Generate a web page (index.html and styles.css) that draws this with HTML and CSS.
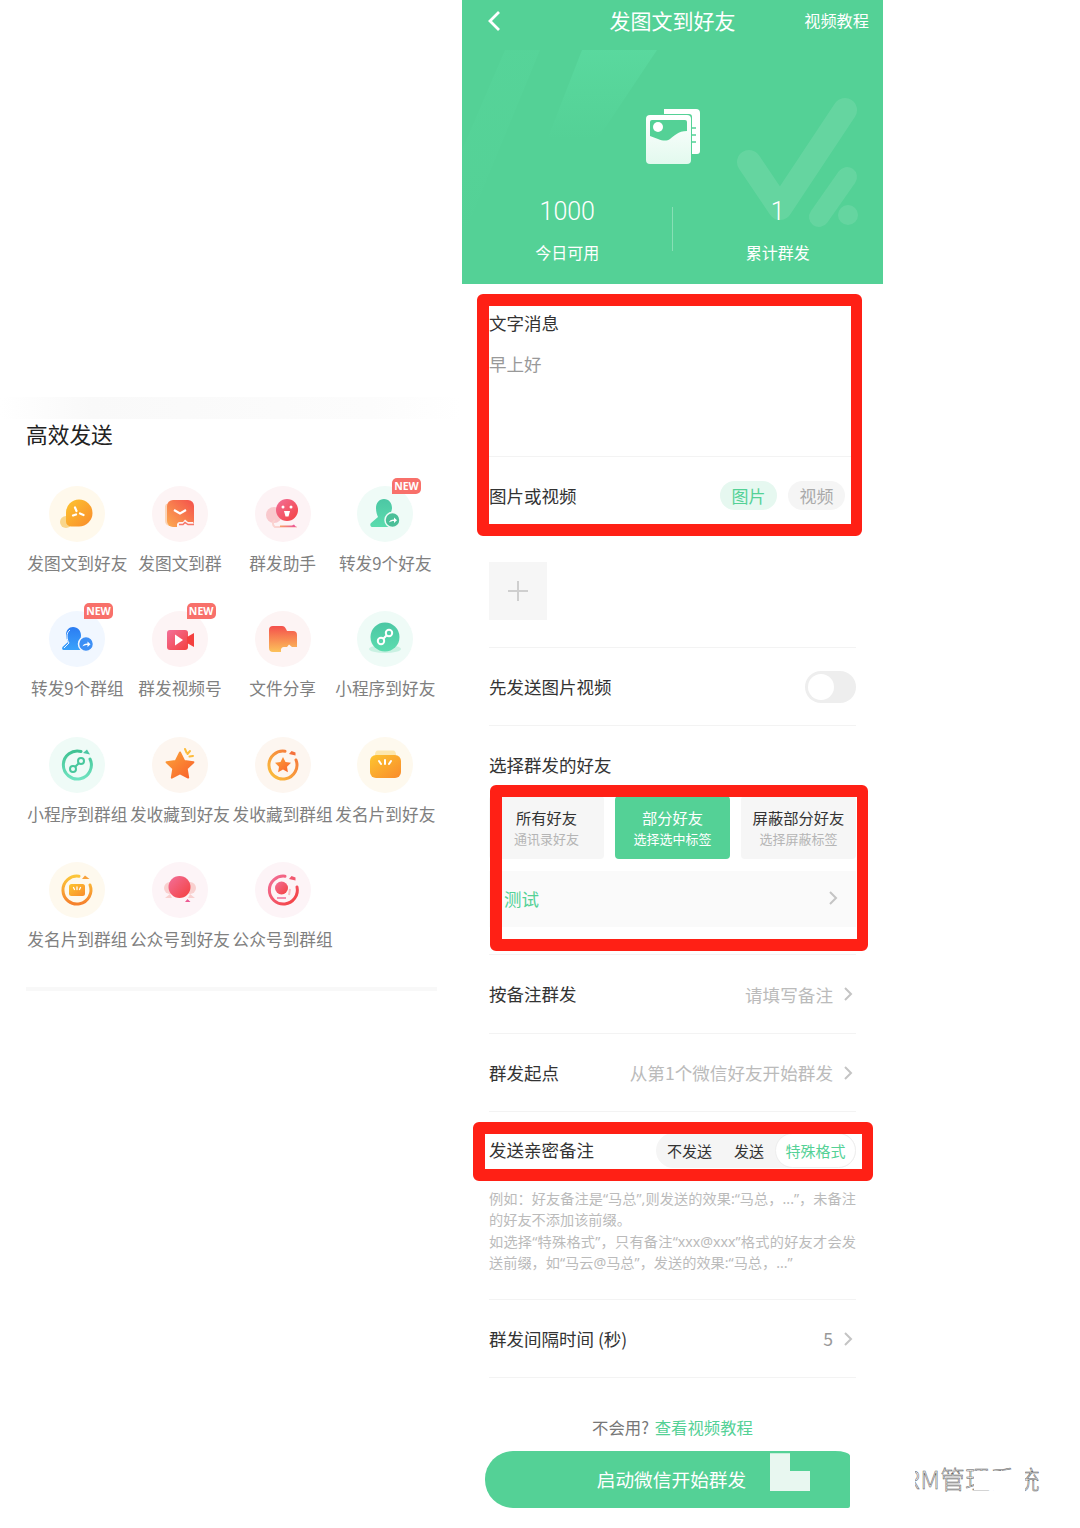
FILE: index.html
```html
<!DOCTYPE html>
<html lang="zh-CN">
<head>
    <meta charset="UTF-8">
    <meta name="viewport" content="width=device-width, initial-scale=1.0">
    <title>发图文到好友</title>
    <link rel="stylesheet" href="styles.css">
</head>
<body>
    <svg class="defs" aria-hidden="true">
        <defs>
            <linearGradient id="gOrange" x1="0" y1="0" x2="1" y2="1"><stop offset="0" stop-color="#fdc52f"/><stop offset="1" stop-color="#f98b2c"/></linearGradient>
            <linearGradient id="gRed" x1="1" y1="0" x2="0" y2="1"><stop offset="0" stop-color="#f4504c"/><stop offset="1" stop-color="#fcab50"/></linearGradient>
            <linearGradient id="gPink" x1="0" y1="0" x2="1" y2="1"><stop offset="0" stop-color="#f2709a"/><stop offset="1" stop-color="#f4403f"/></linearGradient>
            <linearGradient id="gBlue" x1="0" y1="0" x2="0" y2="1"><stop offset="0" stop-color="#2b7cf2"/><stop offset="1" stop-color="#3aa2fb"/></linearGradient>
            <linearGradient id="gMint" x1="0" y1="0" x2="0" y2="1"><stop offset="0" stop-color="#4cc7a4"/><stop offset="1" stop-color="#5bdcae"/></linearGradient>
            <linearGradient id="gFolder" x1="0" y1="0" x2="0" y2="1"><stop offset="0" stop-color="#f4504c"/><stop offset="1" stop-color="#fcc25a"/></linearGradient>
            <linearGradient id="gStar" x1="0" y1="0" x2="1" y2="1"><stop offset="0" stop-color="#fba23a"/><stop offset="1" stop-color="#f9602a"/></linearGradient>
            <linearGradient id="gRingMint" x1="0" y1="0" x2="0" y2="1"><stop offset="0" stop-color="#3fc292"/><stop offset="1" stop-color="#6fe3c0"/></linearGradient>
            <linearGradient id="gRingOrange" x1="1" y1="0" x2="0" y2="1"><stop offset="0" stop-color="#f4713c"/><stop offset="1" stop-color="#fbc23c"/></linearGradient>
            <linearGradient id="gRingGold" x1="0" y1="0" x2="0" y2="1"><stop offset="0" stop-color="#fcc63a"/><stop offset="1" stop-color="#f5812d"/></linearGradient>
            <linearGradient id="gBar" x1="0" y1="0" x2="1" y2="0"><stop offset="0" stop-color="#f9a063"/><stop offset="1" stop-color="#ea4f9a"/></linearGradient>
            <linearGradient id="gCard" x1="0" y1="0" x2="0" y2="1"><stop offset="0" stop-color="#ffffff"/><stop offset="1" stop-color="#e2f9ee"/></linearGradient>
            <linearGradient id="gFade" x1="0" y1="0" x2="0" y2="1"><stop offset="0" stop-color="#5fe0a6" stop-opacity=".5"/><stop offset="1" stop-color="#5fe0a6" stop-opacity="0"/></linearGradient>
        </defs>
    </svg>

    <section class="tools">
        <div class="tools-band"></div>
        <h2 class="tools-title">高效发送</h2>
        <div class="tool-grid">
            <div class="tool">
                <svg class="tool-icon" viewBox="0 0 56 56"><circle cx="28" cy="28" r="28" fill="#fff9ec"/><circle cx="17" cy="36" r="6" fill="#f9d68c"/><path d="M30 13.500a13.500 13.500 0 0 1 0 27h-8a5 5 0 0 1-5-5v-9a13 13 0 0 1 13-13z" fill="url(#gOrange)"/><path d="M26 21.500l1.500 3.500M31 27.500l3.500 1.500M24 29.500l3-1" stroke="#fff" stroke-width="2.200" stroke-linecap="round"/></svg>
                <span class="tool-name">发图文到好友</span>
            </div>
            <div class="tool">
                <svg class="tool-icon" viewBox="0 0 56 56"><circle cx="28" cy="28" r="28" fill="#fdf4f5"/><path d="M14 18h6v22h-2a5 5 0 0 1-5-5V20z" fill="#fbd5b8"/><rect x="15" y="14" width="27" height="27" rx="6" fill="url(#gRed)"/><path d="M22 24l6 3.500 6-3.500" fill="none" stroke="#fff" stroke-width="2.200"/><path d="M25 41v-3a3 3 0 0 1 3-2h3l2-2.500 3 2.500h5v5z" fill="#fdf4f5"/><path d="M27 38.500h4l2-2 3 2h6" fill="none" stroke="#f8766a" stroke-width="1.500"/></svg>
                <span class="tool-name">发图文到群</span>
            </div>
            <div class="tool">
                <svg class="tool-icon" viewBox="0 0 56 56"><circle cx="28" cy="28" r="28" fill="#fdf3f5"/><circle cx="19" cy="29" r="8" fill="#f9c9cd"/><path d="M20 34a4 4 0 0 0 0 7h22" fill="none" stroke="#fbd3d0" stroke-width="2"/><path d="M25 41h16l-2-2.500-2 1H25z" fill="url(#gBar)"/><circle cx="32" cy="24" r="11" fill="url(#gPink)"/><circle cx="28" cy="21" r="1.500" fill="#fff"/><circle cx="36" cy="21" r="1.500" fill="#fff"/><path d="M29 25h6l-1.500 5.500h-3z" fill="#fff"/></svg>
                <span class="tool-name">群发助手</span>
            </div>
            <div class="tool">
                <svg class="tool-icon" viewBox="0 0 56 56"><circle cx="28" cy="28" r="28" fill="#effbf7"/><path d="M27 13c5 0 8 4 8 9 0 3-2 6-3 8l3 4-1 7H16c-2.500 0-3.500-2.500-2-4l7-6c-1-2-2-5-2-9 0-5 3-9 8-9z" fill="url(#gMint)"/><circle cx="35.500" cy="34" r="7.500" fill="#4bbf98" stroke="#effbf7" stroke-width="1.500"/><path d="M32 36.500c.5-2 2-3 5-3v-2l3 2.800-3 2.700v-2c-2 0-3.500.5-5 1.500z" fill="#fff"/></svg>
                <span class="tool-name">转发9个好友</span>
                <span class="badge">NEW</span>
            </div>

            <div class="tool">
                <svg class="tool-icon" viewBox="0 0 56 56"><circle cx="28" cy="28" r="28" fill="#f1f7ff"/><path d="M24 16c5 0 8 4 8 8.500 0 3-1 5-2.500 6.500l3 3v5H15c-2 0-2.500-2-1-3.500l5-4.500c-1-2-2-4-2-7.500 0-4 3-7.500 7-7.500z" fill="url(#gBlue)"/><path d="M21 19c-2 1.500-3 3.500-3 6 0 3 1 5.500 2 7l-5 5" fill="none" stroke="#f1f7ff" stroke-width="1"/><circle cx="37" cy="33" r="7.500" fill="#3d8ff5" stroke="#f1f7ff" stroke-width="1.500"/><path d="M33.500 35.500c.5-2 2-3 5-3v-2l3 2.800-3 2.700v-2c-2 0-3.500.5-5 1.500z" fill="#fff"/></svg>
                <span class="tool-name">转发9个群组</span>
                <span class="badge">NEW</span>
            </div>
            <div class="tool">
                <svg class="tool-icon" viewBox="0 0 56 56"><circle cx="28" cy="28" r="28" fill="#fdf4f5"/><rect x="15" y="19" width="21" height="20" rx="3" fill="url(#gPink)"/><path d="M35 26l7-4v14l-7-4z" fill="#f4403f"/><path d="M23 23.500l8 5.500-8 5.500z" fill="#fff"/></svg>
                <span class="tool-name">群发视频号</span>
                <span class="badge">NEW</span>
            </div>
            <div class="tool">
                <svg class="tool-icon" viewBox="0 0 56 56"><circle cx="28" cy="28" r="28" fill="#fdf4f4"/><path d="M14 19a4 4 0 0 1 4-4h9c2 0 3 1 4 3l1 2h6a4 4 0 0 1 4 4v13a4 4 0 0 1-4 4H18a4 4 0 0 1-4-4z" fill="url(#gFolder)"/><path d="M26 41v-3a3 3 0 0 1 3-2h3l2-2.500 3 2.500h5v5z" fill="#fdf4f4"/></svg>
                <span class="tool-name">文件分享</span>
            </div>
            <div class="tool">
                <svg class="tool-icon" viewBox="0 0 56 56"><circle cx="28" cy="28" r="28" fill="#effbf7"/><ellipse cx="28" cy="38" rx="16" ry="4" fill="#c9f1e2"/><circle cx="28" cy="26" r="14.500" fill="url(#gMint)"/><g fill="none" stroke="#fff" stroke-width="2"><circle cx="24" cy="30" r="3.200"/><circle cx="32" cy="22" r="3.200"/><path d="M26.300 27.700l3.400-3.400"/></g></svg>
                <span class="tool-name">小程序到好友</span>
            </div>

            <div class="tool">
                <svg class="tool-icon" viewBox="0 0 56 56"><circle cx="28" cy="28" r="28" fill="#effbf7"/><path d="M32 14.500A14 14 0 1 0 41 22" fill="none" stroke="url(#gRingMint)" stroke-width="3" stroke-linecap="round"/><path d="M34 16l4-3.500 3 5z" fill="#4cc7a4"/><g fill="none" stroke="#48c79c" stroke-width="2"><circle cx="24" cy="32" r="3"/><circle cx="32" cy="24" r="3"/><path d="M26.200 29.800l3.600-3.600"/></g></svg>
                <span class="tool-name">小程序到群组</span>
            </div>
            <div class="tool">
                <svg class="tool-icon" viewBox="0 0 56 56"><circle cx="28" cy="28" r="28" fill="#fdf6f0"/><path d="M28 15.500l4.200 8.400 9.200 1.300-6.700 6.400 1.500 9-8.200-4.300-8.200 4.300 1.500-9-6.700-6.400 9.200-1.300z" fill="url(#gStar)" stroke="url(#gStar)" stroke-width="2" stroke-linejoin="round"/><path d="M33 12l1.500 3.500M38 14l-2.500 3M41 19l-3.500 .5" stroke="#fdbb3a" stroke-width="2" stroke-linecap="round"/></svg>
                <span class="tool-name">发收藏到好友</span>
            </div>
            <div class="tool">
                <svg class="tool-icon" viewBox="0 0 56 56"><circle cx="28" cy="28" r="28" fill="#fdf6f0"/><path d="M30 14.200A14 14 0 1 0 41 23" fill="none" stroke="url(#gRingOrange)" stroke-width="3" stroke-linecap="round"/><path d="M34 17l2.500-3 4 1.500v3z" fill="#f4713c"/><path d="M28 20l2.500 5 5.500.8-4 3.900.9 5.500-4.900-2.600-4.900 2.600.9-5.500-4-3.900 5.500-.8z" fill="url(#gStar)"/></svg>
                <span class="tool-name">发收藏到群组</span>
            </div>
            <div class="tool">
                <svg class="tool-icon" viewBox="0 0 56 56"><circle cx="28" cy="28" r="28" fill="#fef9ee"/><path d="M18 18c0-3 1-4.500 3-4.500h15c2 0 3 1.500 3 4.500z" fill="#fde7ad"/><rect x="13" y="18" width="31" height="23" rx="6" fill="url(#gOrange)"/><path d="M28 23v4M22 24l2 3M34 24l-2 3" stroke="#fff" stroke-width="2" stroke-linecap="round"/></svg>
                <span class="tool-name">发名片到好友</span>
            </div>

            <div class="tool">
                <svg class="tool-icon" viewBox="0 0 56 56"><circle cx="28" cy="28" r="28" fill="#fef9ee"/><path d="M30 14.200A14 14 0 1 0 41 23" fill="none" stroke="url(#gRingGold)" stroke-width="3" stroke-linecap="round"/><path d="M33 17l3-3.500 4.500 3.500z" fill="#f8a13a"/><rect x="20" y="22" width="16" height="12" rx="2.500" fill="url(#gOrange)"/><path d="M28 25v2.500M24.500 25.500l1 2M31.500 25.500l-1 2" stroke="#fff" stroke-width="1.300" stroke-linecap="round"/></svg>
                <span class="tool-name">发名片到群组</span>
            </div>
            <div class="tool">
                <svg class="tool-icon" viewBox="0 0 56 56"><circle cx="28" cy="28" r="28" fill="#fdf4f7"/><circle cx="18" cy="26" r="6" fill="#f9d0cf"/><circle cx="38" cy="26" r="6" fill="#f9d0cf"/><path d="M13 36h7l-2-4zM43 36h-7l2-4z" fill="#f9d0cf"/><circle cx="27.500" cy="25" r="11" fill="url(#gPink)"/><path d="M16 40h17l2.500-3 3 3z" fill="url(#gBar)"/></svg>
                <span class="tool-name">公众号到好友</span>
            </div>
            <div class="tool">
                <svg class="tool-icon" viewBox="0 0 56 56"><circle cx="28" cy="28" r="28" fill="#fdf4f7"/><path d="M30 14.200A14 14 0 1 0 42 25" fill="none" stroke="url(#gPink)" stroke-width="3" stroke-linecap="round"/><path d="M34 17l2.500-3 4 1.500v3z" fill="#f2576e"/><circle cx="26.500" cy="26" r="6.500" fill="url(#gPink)"/><path d="M22 36h9" stroke="#f2709a" stroke-width="1.500"/><path d="M35 27l-1 6" stroke="#f9c0c5" stroke-width="2"/></svg>
                <span class="tool-name">公众号到群组</span>
            </div>
        </div>
        <div class="tools-rule"></div>
    </section>

    <main class="phone">
        <header class="hero">
            <svg class="hero-bg" viewBox="0 0 421 284">
                <path d="M43 50h35L0 240v-90z" fill="url(#gFade)" opacity=".35"/>
                <path d="M120 50h75l-60 90H85z" fill="url(#gFade)"/>
                <path d="M287 162l31 46 65-98" fill="none" stroke="#fff" stroke-opacity=".1" stroke-width="24" stroke-linecap="round" stroke-linejoin="round"/>
                <path d="M385 177l-28 40" fill="none" stroke="#fff" stroke-opacity=".1" stroke-width="20" stroke-linecap="round"/>
                <circle cx="386" cy="215" r="10" fill="#fff" fill-opacity=".1"/>
            </svg>
            <div class="nav">
                <svg class="nav-back" viewBox="0 0 14 22"><path d="M12 2L3 11l9 9" fill="none" stroke="#fff" stroke-width="2.800"/></svg>
                <span class="nav-title">发图文到好友</span>
                <span class="nav-link">视频教程</span>
            </div>
            <svg class="hero-icon" viewBox="0 0 56 56">
                <path d="M19 1h32a4 4 0 0 1 4 4v38a3 3 0 0 1-3 3h-5V9a3 3 0 0 0-3-3H19z" fill="#fff"/>
                <path d="M47 20h4M47 27h4M47 34h4" stroke="#54d196" stroke-width="1.500"/>
                <rect x="1" y="7" width="45" height="49" rx="4" fill="url(#gCard)"/>
                <path d="M5 14a2 2 0 0 1 2-2h33a2 2 0 0 1 2 2v9c-9 0-13 5-17 8-3 2-7 2-12 0l-8-3z" fill="#54d196"/>
                <circle cx="13" cy="19" r="5" fill="#fff"/>
            </svg>
            <div class="stats">
                <div class="stat"><span class="stat-num">1000</span><span class="stat-label">今日可用</span></div>
                <div class="stat"><span class="stat-num">1</span><span class="stat-label">累计群发</span></div>
            </div>
        </header>

        <div class="form">
            <div class="msg">
                <div class="label">文字消息</div>
                <div class="msg-text">早上好</div>
            </div>
            <div class="row row-plain row-media">
                <span class="label">图片或视频</span>
                <div class="pills"><span class="pill pill-on">图片</span><span class="pill">视频</span></div>
            </div>
            <div class="upload"><svg class="upload-plus" viewBox="0 0 20 20"><path d="M10 0v20M0 10h20" stroke="#cfcfcf" stroke-width="2"/></svg></div>
            <div class="rule"></div>
            <div class="row">
                <span class="label">先发送图片视频</span>
                <span class="toggle"><span class="toggle-knob"></span></span>
            </div>
            <div class="targets">
                <div class="label">选择群发的好友</div>
                <div class="tabs">
                    <div class="tab"><b>所有好友</b><small>通讯录好友</small></div>
                    <div class="tab tab-on"><b>部分好友</b><small>选择选中标签</small></div>
                    <div class="tab"><b>屏蔽部分好友</b><small>选择屏蔽标签</small></div>
                </div>
                <div class="picked">
                    <span>测试</span>
                    <svg class="chev" viewBox="0 0 10 16"><path d="M2 2l6 6-6 6" fill="none" stroke="#c4c4c4" stroke-width="2"/></svg>
                </div>
            </div>
            <div class="row row-tall">
                <span class="label">按备注群发</span>
                <span class="row-value">请填写备注<svg class="chev" viewBox="0 0 10 16"><path d="M2 2l6 6-6 6" fill="none" stroke="#c4c4c4" stroke-width="2"/></svg></span>
            </div>
            <div class="row">
                <span class="label">群发起点</span>
                <span class="row-value">从第1个微信好友开始群发<svg class="chev" viewBox="0 0 10 16"><path d="M2 2l6 6-6 6" fill="none" stroke="#c4c4c4" stroke-width="2"/></svg></span>
            </div>
            <div class="row row-plain row-note">
                <span class="label">发送亲密备注</span>
                <div class="seg">
                    <span class="seg-item seg-a">不发送</span>
                    <span class="seg-item seg-b">发送</span>
                    <span class="seg-item seg-on">特殊格式</span>
                </div>
            </div>
            <div class="note">
                <p class="note-full">例如：好友备注是“马总”,则发送的效果:“马总，...”，未备注</p>
                <p>的好友不添加该前缀。</p>
                <p class="note-full">如选择“特殊格式”，只有备注“xxx@xxx”格式的好友才会发</p>
                <p>送前缀，如“马云@马总”，发送的效果:“马总，...”</p>
            </div>
            <div class="row row-gap">
                <span class="label">群发间隔时间 (秒)</span>
                <span class="row-value row-num">5<svg class="chev" viewBox="0 0 10 16"><path d="M2 2l6 6-6 6" fill="none" stroke="#c4c4c4" stroke-width="2"/></svg></span>
            </div>
            <div class="help">不会用? <a class="help-link">查看视频教程</a></div>
            <div class="start">
                <span>启动微信开始群发</span>
                <i class="start-patch"></i>
            </div>
        </div>

        <!-- red marks drawn on top of the screenshot -->
        <div class="mark mark-msg"></div>
        <div class="mark mark-tabs"></div>
        <div class="mark mark-note"></div>
    </main>

    <div class="stamp">
        RM管理系统
        <i class="stamp-cut stamp-cut-a"></i>
        <i class="stamp-cut stamp-cut-b"></i>
        <i class="stamp-cut stamp-cut-c"></i>
        <i class="stamp-cut stamp-cut-d"></i>
    </div>
</body>
</html>
```

FILE: styles.css
```css
* {
    box-sizing: border-box;
}

html, body {
    height: 1528px;
    overflow: hidden;
}

body {
    margin: 0;
    position: relative;
    display: flex;
    background-color: #fff;
    font-family: "Noto Sans CJK SC", "Noto Sans", sans-serif;
}

.defs {
    position: absolute;
    width: 0;
    height: 0;
}

/* left panel */
.tools {
    width: 462px;
    padding: 397px 25px 0 26px;
}

.tools-band {
    height: 22px;
    margin: 0 -25px 0 -26px;
    background: linear-gradient(90deg, #fff, #f9f9f9 20%, #fcfcfc 80%, #fff);
}

.tools-title {
    margin: 0;
    font-size: 21.7px;
    font-weight: 400;
    line-height: 30px;
    color: #222;
}

.tool-grid {
    display: grid;
    grid-template-columns: repeat(4, 102.67px);
    grid-auto-rows: 125.33px;
    margin-top: 37px;
}

.tool {
    position: relative;
    display: flex;
    flex-direction: column;
    align-items: center;
}

.tool-icon {
    width: 56px;
    height: 56px;
    flex: none;
}

.tool-name {
    margin-top: 9px;
    font-size: 16.7px;
    line-height: 24px;
    color: #808080;
    white-space: nowrap;
}

.badge {
    position: absolute;
    top: -8px;
    left: 58px;
    width: 29px;
    height: 16px;
    border-radius: 5px 5px 5px 0;
    background-color: #f8706a;
    color: #fff;
    font-family: "Noto Sans", sans-serif;
    font-size: 10.5px;
    font-weight: 700;
    line-height: 16px;
    text-align: center;
}

.tools-rule {
    height: 4px;
    width: 411px;
    background-color: #f8f8f8;
}

/* right panel */
.phone {
    position: relative;
    width: 421px;
}

.hero {
    position: relative;
    height: 284px;
    background-color: #54d196;
    color: #fff;
}

.hero-bg {
    position: absolute;
    inset: 0;
    width: 100%;
    height: 100%;
}

.nav {
    position: relative;
    height: 40px;
    display: flex;
    align-items: center;
    justify-content: center;
}

.nav-back {
    position: absolute;
    left: 25px;
    top: 10px;
    width: 14px;
    height: 22px;
}

.nav-title {
    font-size: 21px;
}

.nav-link {
    position: absolute;
    right: 14px;
    font-size: 16.2px;
}

.hero-icon {
    position: relative;
    display: block;
    width: 56px;
    height: 56px;
    margin: 68px auto 0;
}

.stats {
    position: relative;
    display: flex;
    margin-top: 30px;
}

.stats::after {
    content: "";
    position: absolute;
    left: 210px;
    top: 13px;
    width: 1px;
    height: 44px;
    background-color: rgba(255, 255, 255, 0.3);
}

.stat {
    flex: 1;
    display: flex;
    flex-direction: column;
    align-items: center;
}

.stat-num {
    font-family: Roboto, sans-serif;
    font-size: 25px;
    font-weight: 300;
    line-height: 36px;
}

.stat-label {
    margin-top: 10px;
    font-size: 16px;
    line-height: 24px;
}

.form {
    padding: 0 27px;
}

.label {
    font-size: 17.5px;
    line-height: 34px;
    color: #333;
}

.msg {
    height: 173px;
    padding-top: 22px;
    border-bottom: 1px solid #f3f3f3;
}

.msg-text {
    margin-top: 7px;
    font-size: 17.5px;
    line-height: 34px;
    color: #999;
}

.row {
    height: 78px;
    display: flex;
    align-items: center;
    justify-content: space-between;
    border-bottom: 1px solid #f3f3f3;
}

.row-plain {
    border-bottom: none;
}

.row-media {
    height: 77px;
}

.row-tall {
    height: 79px;
}

.pills {
    display: flex;
    gap: 11px;
    margin-right: 11px;
}

.pill {
    width: 57px;
    height: 29px;
    border-radius: 15px;
    background-color: #f5f5f5;
    color: #aaa;
    font-size: 17px;
    line-height: 29px;
    text-align: center;
}

.pill-on {
    background-color: #e6f8f0;
    color: #54d196;
}

.upload {
    width: 58px;
    height: 58px;
    margin-top: 28px;
    display: flex;
    align-items: center;
    justify-content: center;
    background-color: #f6f6f6;
}

.upload-plus {
    width: 20px;
    height: 20px;
}

.rule {
    height: 1px;
    margin-top: 27px;
    background-color: #f3f3f3;
}

.toggle {
    width: 51px;
    height: 32px;
    padding: 3px;
    border-radius: 16px;
    background-color: #eee;
}

.toggle-knob {
    display: block;
    width: 26px;
    height: 26px;
    border-radius: 50%;
    background-color: #fff;
}

.targets {
    padding: 22px 0 27px;
    border-bottom: 1px solid #f3f3f3;
}

.tabs {
    display: grid;
    grid-template-columns: repeat(3, 115px);
    justify-content: space-between;
    margin-top: 14px;
}

.tab {
    height: 63px;
    padding-top: 9px;
    border-radius: 4px;
    background-color: #f6f6f6;
    text-align: center;
}

.tab b {
    display: block;
    font-size: 15.3px;
    font-weight: 400;
    line-height: 24px;
    color: #333;
}

.tab small {
    display: block;
    font-size: 13px;
    line-height: 20px;
    color: #b5b5b5;
}

.tab-on {
    background-color: #54d196;
}

.tab-on b, .tab-on small {
    color: #fff;
}

.picked {
    height: 56px;
    margin-top: 12px;
    padding: 0 18px 2px 15px;
    display: flex;
    align-items: center;
    justify-content: space-between;
    background-color: #fafafa;
    color: #54d196;
    font-size: 17.5px;
}

.chev {
    width: 10px;
    height: 16px;
    flex: none;
}

.row-value {
    display: flex;
    align-items: center;
    gap: 10px;
    margin-right: 3px;
    color: #bbb;
    font-size: 17.6px;
}

.row-num {
    color: #999;
}

.row-note {
    height: 76px;
}

.seg {
    display: flex;
    align-items: center;
    width: 200px;
    height: 35px;
    border-radius: 18px;
    background-color: #f5f5f5;
    font-size: 15px;
    color: #333;
}

.seg-item {
    text-align: center;
}

.seg-a {
    width: 67px;
}

.seg-b {
    width: 52px;
}

.seg-on {
    width: 81px;
    height: 35px;
    border: 1px solid #eee;
    border-radius: 18px;
    background-color: #fff;
    color: #54d196;
    line-height: 33px;
}

.note {
    padding-bottom: 26px;
    border-bottom: 1px solid #f3f3f3;
    color: #bbb;
    font-family: "Noto Sans", "Noto Sans CJK SC", sans-serif;
    font-size: 14.2px;
    line-height: 21.3px;
}

.note p {
    margin: 0;
    white-space: nowrap;
}

.note .note-full {
    white-space: normal;
    text-align-last: justify;
}

.help {
    margin-top: 37px;
    color: #777;
    font-size: 16.4px;
    line-height: 24px;
    text-align: center;
    word-spacing: 2px;
}

.help-link {
    color: #54d196;
}

.start {
    position: relative;
    width: 365px;
    height: 57px;
    margin: 12px 0 0 -4px;
    padding-left: 8px;
    border-radius: 28px 15px 2px 28px / 28px 5px 2px 28px;
    background-color: #54d196;
    color: #fff;
    font-size: 18.7px;
    line-height: 55px;
    text-align: center;
}

.start-patch {
    position: absolute;
    left: 285px;
    top: 2px;
    width: 40px;
    height: 38px;
    background-color: #e8f7f0;
    clip-path: polygon(0 0, 50% 0, 50% 47%, 100% 47%, 100% 100%, 0 100%);
}

.mark {
    position: absolute;
    border: 12px solid #ff2015;
    border-right-width: 11px;
    border-radius: 6px;
}

.mark-msg {
    left: 15px;
    top: 294px;
    width: 385px;
    height: 242px;
}

.mark-tabs {
    left: 28px;
    top: 785px;
    width: 378px;
    height: 166px;
}

.mark-note {
    left: 11px;
    top: 1122px;
    width: 400px;
    height: 59px;
}

/* half erased watermark, bottom right */
.stamp {
    position: absolute;
    left: 905px;
    top: 1461px;
    color: #fff;
    -webkit-text-stroke: 0.5px #555;
    font-size: 24.5px;
    font-weight: 300;
    letter-spacing: 0.5px;
    line-height: 36px;
    white-space: nowrap;
}

.stamp-cut {
    position: absolute;
    background-color: #fff;
}

.stamp-cut-a {
    left: 0;
    top: 0;
    width: 10px;
    height: 36px;
}

.stamp-cut-b {
    left: 69px;
    top: 10px;
    width: 21px;
    height: 19px;
}

.stamp-cut-c {
    left: 90px;
    top: 10px;
    width: 24px;
    height: 26px;
}

.stamp-cut-d {
    left: 114px;
    top: 0;
    width: 6px;
    height: 36px;
}
```
